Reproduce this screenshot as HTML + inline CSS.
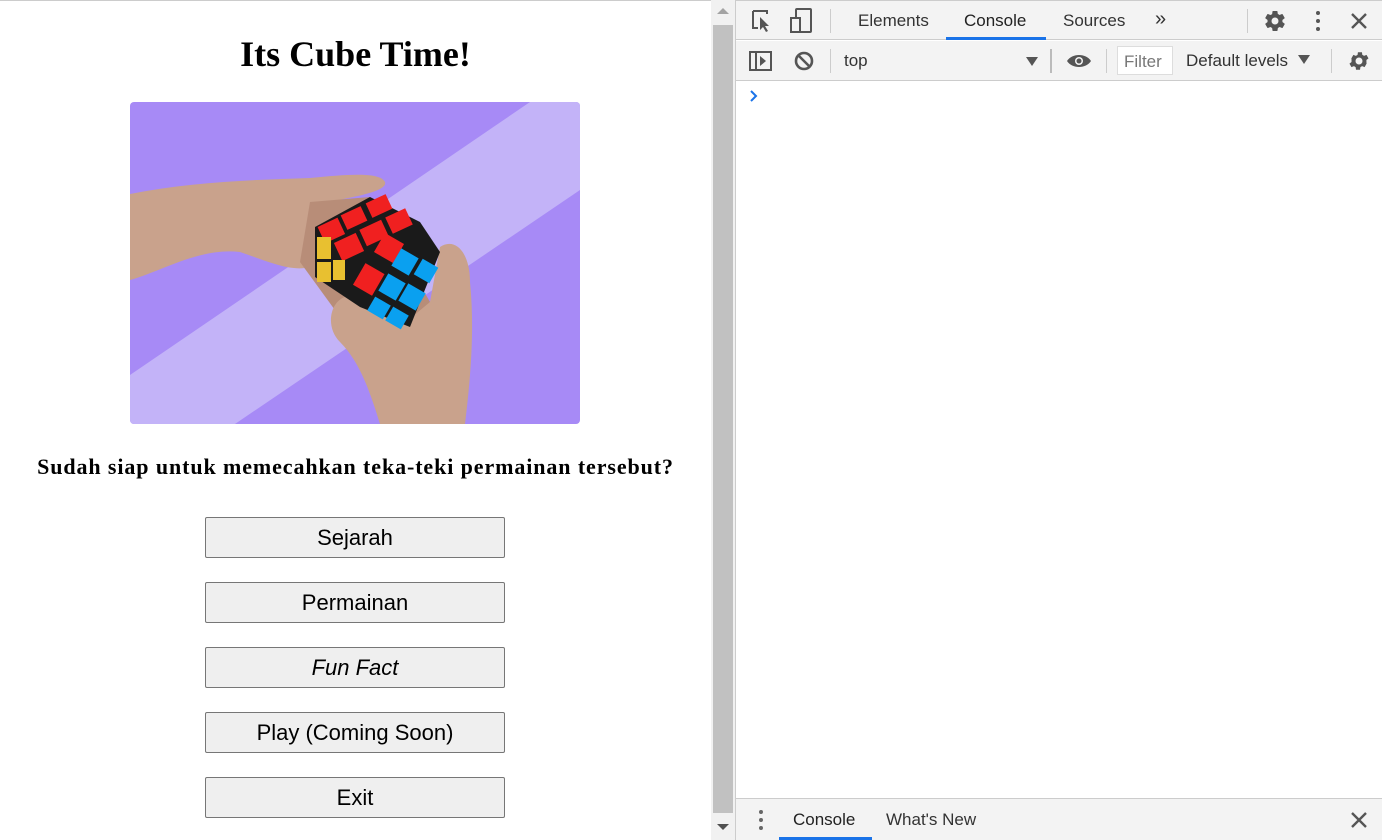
<!DOCTYPE html>
<html><head><meta charset="utf-8"><style>
*{margin:0;padding:0;box-sizing:border-box}
body{width:1382px;height:840px;overflow:hidden;background:#fff;position:relative;font-family:"Liberation Sans",sans-serif}
.abs{position:absolute}
h1{position:absolute;left:0;width:711px;top:33px;text-align:center;font:bold 36px "Liberation Serif",serif;color:#000}
.q{position:absolute;left:0;width:711px;top:454px;text-align:center;font:bold 22px "Liberation Serif",serif;letter-spacing:0.9px}
.btn{position:absolute;left:205px;width:300px;height:41px;background:#efefef;border:1px solid #767676;border-radius:2px;text-align:center;font-size:22px;line-height:39px;color:#000}
.dt{color:#333;font-size:17px}
</style></head><body>
<div class="abs" style="left:0;top:0;width:736px;height:1px;background:#ccc"></div>
<h1>Its Cube Time!</h1>
<svg class="abs" style="left:130px;top:102px" width="450" height="322" viewBox="0 0 450 322">
<defs><clipPath id="c"><rect width="450" height="322" rx="4"/></clipPath></defs>
<g clip-path="url(#c)">
<rect width="450" height="322" fill="#a78af6"/>
<polygon points="400,0 450,0 450,88 105,322 0,322 0,273" fill="#c3b3f8"/>
<path d="M0,92 C60,80 120,78 180,76 C220,72 250,70 255,80 C258,90 220,95 200,100 L190,160 C170,175 140,160 110,150 C70,145 30,170 0,178 Z" fill="#c9a28c"/>
<path d="M180,100 L240,95 L300,200 L280,225 L210,215 L170,160 Z" fill="#b88d78"/>
<path d="M310,145 C325,135 340,150 340,180 C345,230 340,280 335,322 L250,322 C240,290 230,260 210,240 C195,225 200,200 215,195 C240,200 260,210 270,225 L300,200 Z" fill="#c9a28c"/>
<polygon points="185,125 240,95 290,120 310,150 280,225 230,205 185,175" fill="#1a1a1a"/>
<g fill="#f02020">
<rect x="190" y="120" width="22" height="18" transform="rotate(-25 200 128)"/>
<rect x="213" y="108" width="22" height="16" transform="rotate(-25 224 116)"/>
<rect x="238" y="96" width="22" height="16" transform="rotate(-25 249 104)"/>
<rect x="207" y="135" width="24" height="20" transform="rotate(-25 219 145)"/>
<rect x="232" y="122" width="24" height="18" transform="rotate(-25 244 131)"/>
<rect x="258" y="110" width="22" height="18" transform="rotate(-25 269 119)"/>
<rect x="228" y="165" width="22" height="25" transform="rotate(30 239 177)"/>
<rect x="248" y="135" width="22" height="22" transform="rotate(30 259 146)"/>
</g>
<g fill="#e8c030"><rect x="187" y="135" width="14" height="22"/><rect x="187" y="160" width="14" height="20"/><rect x="203" y="158" width="12" height="20"/></g>
<g fill="#0aa0f0">
<rect x="265" y="150" width="20" height="20" transform="rotate(30 275 160)"/>
<rect x="287" y="160" width="18" height="18" transform="rotate(30 296 169)"/>
<rect x="252" y="175" width="20" height="20" transform="rotate(30 262 185)"/>
<rect x="272" y="185" width="20" height="20" transform="rotate(30 282 195)"/>
<rect x="240" y="198" width="18" height="16" transform="rotate(30 249 206)"/>
<rect x="258" y="208" width="18" height="16" transform="rotate(30 267 216)"/>
</g>
</g></svg>
<div class="q">Sudah siap untuk memecahkan teka-teki permainan tersebut?</div>
<div class="btn" style="top:517px">Sejarah</div>
<div class="btn" style="top:582px">Permainan</div>
<div class="btn" style="top:647px;font-style:italic">Fun Fact</div>
<div class="btn" style="top:712px">Play (Coming Soon)</div>
<div class="btn" style="top:777px">Exit</div>
<!-- scrollbar -->
<div class="abs" style="left:711px;top:0;width:25px;height:840px;background:#f1f1f1;border-right:1px solid #ccc"></div>
<div class="abs" style="left:713px;top:25px;width:20px;height:788px;background:#c1c1c1"></div>
<div class="abs" style="left:717px;top:8px;width:0;height:0;border-left:6px solid transparent;border-right:6px solid transparent;border-bottom:6px solid #a3a3a3"></div>
<div class="abs" style="left:717px;top:824px;width:0;height:0;border-left:6px solid transparent;border-right:6px solid transparent;border-top:6px solid #505050"></div>
<!-- devtools -->
<div class="abs" style="left:736px;top:0;width:646px;height:40px;background:#f3f3f3;border-bottom:1px solid #ccc;border-top:1px solid #ccc"></div>
<svg class="abs" style="left:750px;top:8px" width="30" height="26"><path d="M3,3 h14 v3 M3,3 v17 h5" stroke="#555" stroke-width="2" fill="none"/><path d="M10,9 l9,9 h-4 l3,5 -2,1 -3,-5 -3,3 z" fill="#555"/></svg>
<svg class="abs" style="left:789px;top:7px" width="26" height="28"><rect x="7" y="2" width="15" height="23" rx="1" stroke="#555" stroke-width="2" fill="none"/><rect x="2" y="11" width="9" height="14" stroke="#555" stroke-width="2" fill="#f3f3f3"/></svg>
<div class="abs" style="left:830px;top:9px;width:1px;height:24px;background:#ccc"></div>
<div class="abs dt" style="left:858px;top:11px">Elements</div>
<div class="abs dt" style="left:964px;top:11px;color:#222">Console</div>
<div class="abs" style="left:946px;top:37px;width:100px;height:3px;background:#1a73e8"></div>
<div class="abs dt" style="left:1063px;top:11px">Sources</div>
<div class="abs dt" style="left:1155px;top:8px;font-size:20px">»</div>
<div class="abs" style="left:1247px;top:9px;width:1px;height:24px;background:#ccc"></div>
<svg class="abs" style="left:1263px;top:9px" width="24" height="24" viewBox="0 0 24 24"><path fill="#555" d="M19.4 13c.04-.3.06-.65.06-1s-.02-.7-.07-1l2.1-1.65c.2-.15.24-.42.12-.64l-2-3.46c-.12-.22-.39-.3-.61-.22l-2.49 1c-.52-.4-1.080-.73-1.69-.98l-.38-2.65A.49.49 0 0 0 14 2h-4c-.25 0-.46.18-.49.42l-.38 2.65c-.61.25-1.17.59-1.69.98l-2.49-1c-.23-.09-.49 0-.61.22l-2 3.46c-.13.22-.07.49.12.64L4.57 11c-.05.3-.07.66-.07 1s.02.7.07 1l-2.11 1.65c-.19.15-.24.42-.12.64l2 3.46c.12.22.39.3.61.22l2.49-1c.52.4 1.08.73 1.69.98l.38 2.65c.03.24.24.42.49.42h4c.25 0 .46-.18.49-.42l.38-2.65c.61-.25 1.17-.59 1.69-.98l2.49 1c.23.09.49 0 .61-.22l2-3.46c.12-.22.07-.49-.12-.64L19.4 13zM12 15.5a3.5 3.5 0 1 1 0-7 3.5 3.5 0 0 1 0 7z"/></svg>
<svg class="abs" style="left:1311px;top:9px" width="14" height="24"><circle cx="7" cy="4" r="2" fill="#555"/><circle cx="7" cy="12" r="2" fill="#555"/><circle cx="7" cy="20" r="2" fill="#555"/></svg>
<svg class="abs" style="left:1350px;top:12px" width="18" height="18"><path d="M2,2 16,16 M16,2 2,16" stroke="#555" stroke-width="2.4"/></svg>
<!-- row 2 -->
<div class="abs" style="left:736px;top:41px;width:646px;height:40px;background:#f3f3f3;border-bottom:1px solid #ccc"></div>
<svg class="abs" style="left:748px;top:50px" width="26" height="22"><rect x="2" y="2" width="21" height="18" stroke="#555" stroke-width="2" fill="none"/><line x1="8" y1="2" x2="8" y2="20" stroke="#555" stroke-width="2"/><path d="M12,6 l6,5 -6,5z" fill="#555"/></svg>
<svg class="abs" style="left:793px;top:50px" width="22" height="22"><circle cx="11" cy="11" r="8" stroke="#555" stroke-width="2.6" fill="none"/><line x1="5" y1="5" x2="17" y2="17" stroke="#555" stroke-width="2.6"/></svg>
<div class="abs" style="left:830px;top:49px;width:1px;height:24px;background:#ccc"></div>
<div class="abs dt" style="left:844px;top:51px">top</div>
<div class="abs" style="left:1026px;top:57px;border-left:6px solid transparent;border-right:6px solid transparent;border-top:9px solid #555"></div>
<div class="abs" style="left:1050px;top:49px;width:2px;height:24px;background:#bbb"></div>
<svg class="abs" style="left:1066px;top:52px" width="26" height="18"><path d="M1,9 C6,1 20,1 25,9 C20,17 6,17 1,9z" fill="#555"/><circle cx="13" cy="9" r="4" fill="#f3f3f3"/><circle cx="13" cy="9" r="2.5" fill="#555"/></svg>
<div class="abs" style="left:1106px;top:49px;width:1px;height:24px;background:#ccc"></div>
<div class="abs" style="left:1117px;top:46px;width:56px;height:29px;background:#fff;border:1px solid #ddd"></div>
<div class="abs dt" style="left:1124px;top:52px;color:#777">Filter</div>
<div class="abs dt" style="left:1186px;top:51px">Default levels</div>
<div class="abs" style="left:1298px;top:55px;border-left:6px solid transparent;border-right:6px solid transparent;border-top:9px solid #555"></div>
<div class="abs" style="left:1331px;top:49px;width:1px;height:24px;background:#ccc"></div>
<svg class="abs" style="left:1347px;top:49px" width="24" height="24" viewBox="0 0 24 24"><path fill="#555" d="M19.4 13c.04-.3.06-.65.06-1s-.02-.7-.07-1l2.1-1.650l-2-3.460l-2.49 1c-.52-.4-1.08-.73-1.690-.98l-.38-2.650h-4l-.38 2.650c-.61.25-1.17.59-1.690.98l-2.49-1l-2 3.460L4.57 11c-.05.3-.07.66-.07 1s.02.7.07 1l-2.11 1.650l2 3.460l2.49-1c.52.4 1.08.73 1.690.98l.38 2.650h4l.38-2.650c.61-.25 1.17-.59 1.690-.98l2.49 1l2-3.460L19.4 13zM12 15.5a3.5 3.5 0 1 1 0-7 3.5 3.5 0 0 1 0 7z"/></svg>
<svg class="abs" style="left:749px;top:89px" width="10" height="14"><path d="M2,2 7,7 2,12" stroke="#1a73e8" stroke-width="2" fill="none"/></svg>
<!-- bottom drawer -->
<div class="abs" style="left:736px;top:798px;width:646px;height:42px;background:#f3f3f3;border-top:1px solid #ccc"></div>
<svg class="abs" style="left:756px;top:808px" width="10" height="24"><circle cx="5" cy="4" r="2" fill="#666"/><circle cx="5" cy="12" r="2" fill="#666"/><circle cx="5" cy="20" r="2" fill="#666"/></svg>
<div class="abs dt" style="left:793px;top:810px;color:#222">Console</div>
<div class="abs" style="left:779px;top:837px;width:93px;height:3px;background:#1a73e8"></div>
<div class="abs dt" style="left:886px;top:810px">What's New</div>
<svg class="abs" style="left:1350px;top:811px" width="18" height="18"><path d="M2,2 16,16 M16,2 2,16" stroke="#555" stroke-width="2.4"/></svg>
</body></html>
